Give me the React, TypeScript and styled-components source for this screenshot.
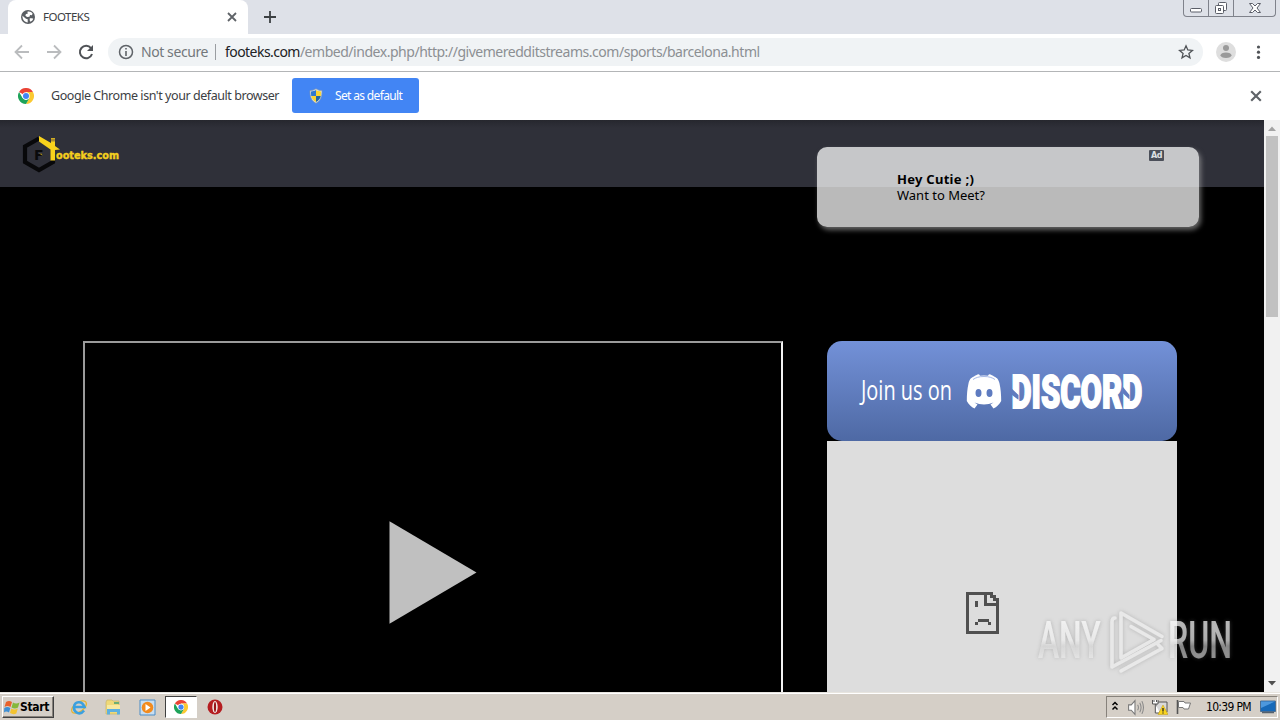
import type { ReactNode } from "react";
import styled, { createGlobalStyle } from "styled-components";

const GlobalStyle = createGlobalStyle`
    * {
        box-sizing: border-box;
    }
    body {
        margin: 0;
        overflow: hidden;
        background: #000;
        font-family: "Noto Sans", "Open Sans", sans-serif;
    }
    svg {
        display: block;
        flex: none;
    }
`;

const Screen = styled.div`
    position: relative;
    display: flex;
    flex-direction: column;
    width: 1280px;
    height: 720px;
    overflow: hidden;
`;

const Text = styled.span<{ $size: number; $spacing?: number; $color?: string; $weight?: number }>`
    font-size: ${(p) => p.$size}px;
    letter-spacing: ${(p) => p.$spacing ?? 0}px;
    color: ${(p) => p.$color ?? "#3c4043"};
    font-weight: ${(p) => p.$weight ?? 400};
    line-height: 16px;
    white-space: pre;
`;

/* browser chrome */

const TabStrip = styled.div`
    display: flex;
    height: 34px;
    padding-left: 8px;
    background: #dee1e8;
`;

const Tab = styled.div`
    display: flex;
    align-items: center;
    width: 240px;
    padding: 0 11px 0 13px;
    background: #fff;
    border-radius: 8px 8px 0 0;
`;

const TabTitle = styled.div`
    display: flex;
    flex: 1;
    margin-left: 8px;
`;

const NewTab = styled.div`
    display: flex;
    align-items: center;
    padding-left: 15px;
    flex: 1;
`;

const Captions = styled.div`
    display: flex;
    height: 17px;
    margin-right: 4px;
    border: 1px solid #7f828b;
    border-top: 0;
    border-radius: 0 0 4px 4px;
`;

const Caption = styled.div<{ $width: number }>`
    display: flex;
    justify-content: center;
    width: ${(p) => p.$width}px;
    & + & {
        border-left: 1px solid #7f828b;
    }
`;

const Toolbar = styled.div`
    display: flex;
    align-items: center;
    height: 38px;
    padding: 0 11px 1px 13px;
    background: #fff;
    border-bottom: 1px solid #b3b5b7;
`;

const NavIcons = styled.div`
    display: flex;
    gap: 14px;
    width: 95px;
`;

const Omnibox = styled.div`
    display: flex;
    align-items: center;
    width: 1095px;
    height: 28px;
    padding: 0 9px 0 10px;
    border-radius: 14px;
    background: #f0f3f5;
`;

const Security = styled.div`
    display: flex;
    align-items: center;
    flex: none;
    width: 75px;
    height: 16px;
    margin: 0 9px 0 7px;
    border-right: 1px solid #9a9da1;
`;

const Url = styled.div`
    flex: 1;
    display: flex;
`;

const ToolbarEnd = styled.div`
    display: flex;
    align-items: center;
    gap: 12px;
    margin-left: 13px;
`;

const InfoBar = styled.div`
    display: flex;
    align-items: center;
    height: 48px;
    padding: 0 18px 1px;
    background: #fff;
`;

const InfoMessage = styled.div`
    display: flex;
    width: 241px;
    margin-left: 17px;
`;

const DefaultButton = styled.div`
    display: flex;
    align-items: center;
    gap: 11px;
    width: 127px;
    height: 35px;
    padding-left: 16px;
    border-radius: 3px;
    background: #4285f4;
`;

const InfoClose = styled.div`
    margin-left: auto;
`;

/* web page */

const Viewport = styled.div`
    display: flex;
    height: 572px;
`;

const Page = styled.div`
    flex: 1;
    position: relative;
    overflow: hidden;
    background: #000;
`;

const SiteHeader = styled.div`
    height: 67px;
    padding: 14px 0 0 21px;
    background: linear-gradient(#26272e, #2f3039 8px);
`;

const Columns = styled.div`
    display: flex;
    gap: 44px;
    padding: 154px 0 0 83px;
`;

const Player = styled.div`
    display: flex;
    justify-content: center;
    width: 700px;
    height: 460px;
    padding-top: 178px;
    border: 2px solid #9b9b9b;
    border-right-color: #f2f2f2;
`;

const Sidebar = styled.div`
    width: 350px;
`;

const DiscordBanner = styled.div`
    height: 100px;
    border-radius: 15px;
    background: linear-gradient(#7391d8, #4e69a4);
`;

const DeadFrame = styled.div`
    display: flex;
    justify-content: center;
    height: 360px;
    padding: 151px 39px 0 0;
    background: #ddd;
`;

const AdPopup = styled.div`
    position: absolute;
    top: 27px;
    left: 817px;
    display: flex;
    width: 382px;
    height: 80px;
    padding-left: 80px;
    border-radius: 10px;
    background: rgba(255, 255, 255, 0.73);
    box-shadow: 2px 3px 5px rgba(170, 170, 170, 0.6);
`;

const AdText = styled.div`
    display: flex;
    flex-direction: column;
    width: 252px;
    padding-top: 24px;
`;

const AdBadge = styled.div`
    width: 15px;
    height: 11px;
    margin-top: 3px;
    border-radius: 1px;
    background: #4b4f59;
    color: #dfe1e5;
    font: bold 8px/11px "DejaVu Sans", sans-serif;
    letter-spacing: -0.5px;
    text-align: center;
`;

const ScrollBar = styled.div`
    display: flex;
    flex-direction: column;
    align-items: center;
    width: 16px;
    background: #f1f1f1;
`;

const ScrollArrow = styled.div<{ $down?: boolean }>`
    display: flex;
    align-items: center;
    justify-content: center;
    width: 16px;
    height: 16px;
    color: ${(p) => (p.$down ? "#505050" : "#a3a3a3")};
    transform: ${(p) => (p.$down ? "rotate(180deg)" : "none")};
`;

const Thumb = styled.div`
    width: 12px;
    height: 181px;
    margin-bottom: auto;
    background: #c1c1c1;
`;

/* taskbar */

const TaskBar = styled.div`
    display: flex;
    align-items: center;
    height: 28px;
    padding: 1px 2px 0;
    background: #d5cfc7;
    border-top: 1px solid #e8e5df;
    box-shadow: inset 0 1px #fff;
`;

const StartButton = styled.div`
    display: flex;
    align-items: center;
    width: 52px;
    height: 22px;
    padding-left: 1px;
    border: 1px solid;
    border-color: #fff #404040 #404040 #fff;
    box-shadow: inset -1px -1px #87827b;
`;

const StartLabel = styled.span`
    font: bold 12px/16px "DejaVu Sans Condensed", sans-serif;
    letter-spacing: -0.35px;
    color: #000;
`;

const Task = styled.div<{ $active?: boolean }>`
    display: flex;
    align-items: center;
    justify-content: center;
    width: 32px;
    height: 22px;
    margin-left: 2px;
    border: 1px solid;
    border-color: ${(p) => (p.$active ? "#404040 #fff #fff #404040" : "transparent")};
    background: ${(p) => (p.$active ? "#fff" : "transparent")};
`;

const Tasks = styled.div`
    display: flex;
    flex: 1;
    padding-left: 7px;
`;

const Tray = styled.div`
    display: flex;
    align-items: center;
    width: 172px;
    height: 22px;
    padding-left: 4px;
    border: 1px solid;
    border-color: #87827b #fff #fff #87827b;
`;

const Clock = styled.span`
    width: 54px;
    margin-left: 14px;
    font: 12px/16px "DejaVu Sans Condensed", sans-serif;
    letter-spacing: -0.68px;
    color: #000;
    white-space: nowrap;
`;

const TrayIcons = styled.div`
    display: flex;
    align-items: center;
    gap: 8px;
`;

const Watermark = styled.div`
    position: absolute;
    left: 1030px;
    top: 604px;
`;

function Icon({ size, box = 16, children }: { size: number; box?: number; children: ReactNode }) {
    return (
        <svg width={size} height={size} viewBox={`0 0 ${box} ${box}`} fill="none">
            {children}
        </svg>
    );
}

function Cross({ size, width = 1.8 }: { size: number; width?: number }) {
    return (
        <Icon size={size} box={10}>
            <path d="M1 1l8 8M9 1L1 9" stroke="#5f6368" strokeWidth={width} />
        </Icon>
    );
}

function ChromeLogo({ size }: { size: number }) {
    return (
        <Icon size={size} box={48}>
            <path d="M24 24L3.2 12A24 24 0 0 1 44.8 12H24z" fill="#ea4335" />
            <path d="M24 12h20.8A24 24 0 0 1 24 48l10.4-18z" fill="#fbc931" />
            <path d="M3.2 12A24 24 0 0 0 24 48l10.4-18-10.4 6-10.4-6z" fill="#1ea35a" />
            <circle cx="24" cy="24" r="11" fill="#fff" />
            <circle cx="24" cy="24" r="9" fill="#4285f4" />
        </Icon>
    );
}

function Globe() {
    return (
        <Icon size={14} box={24}>
            <circle cx="12" cy="12" r="12" fill="#5a5e63" />
            <path
                d="M2.500 10l6 5 3 1v5.500C6 21 2.400 17 2.500 10zM11 3C15 2 18 3.500 20 6.500L18.500 9l-3-.5-1 3-4 .5-3-2 1-3 3-.5z"
                fill="#fff"
            />
            <path d="M15 14h4l2 1c-1 3-3 4.500-5 5l-1-2z" fill="#fff" />
        </Icon>
    );
}

function Shield() {
    return (
        <Icon size={16}>
            <path d="M8 .8c2 1.400 4 1.700 6 1.700 0 6-1 10-6 12.700C3 12.500 2 8.500 2 2.500c2 0 4-.3 6-1.700z" fill="#dce6ee" stroke="#8a98a5" strokeWidth=".7" />
            <path d="M8 2v6H3.200C3 6.500 3 5 3 3.500 5 3.400 6.500 3 8 2z" fill="#2f78d0" />
            <path d="M8 2v6h4.800c.2-1.500.2-3 .2-4.500C11 3.400 9.500 3 8 2z" fill="#fad432" />
            <path d="M8 8v6c-3-1.600-4.300-3.500-4.800-6z" fill="#fad432" />
            <path d="M8 8v6c3-1.600 4.300-3.500 4.800-6z" fill="#25669f" />
        </Icon>
    );
}

function CaptionButtons() {
    return (
        <Captions>
            <Caption $width={24}>
                <svg width="14" height="16" fill="none">
                    <rect x="1.500" y="8.500" width="11" height="3.500" rx="1" fill="#fff" stroke="#5b5e68" />
                </svg>
            </Caption>
            <Caption $width={25}>
                <svg width="14" height="16" fill="none" stroke="#5b5e68">
                    <rect x="4.500" y="2.500" width="8" height="8" rx="1" fill="#fff" />
                    <rect x="1.500" y="5.500" width="8" height="8" rx="1" fill="#fff" />
                    <rect x="4.500" y="8.500" width="2" height="2" />
                </svg>
            </Caption>
            <Caption $width={42}>
                <svg width="14" height="16" fill="none">
                    <path d="M1.500 3.500h3l2.500 2.500 2.500-2.500h3L9 8l3.500 4.500h-3L7 10l-2.500 2.500h-3L5 8z" fill="#fff" stroke="#5b5e68" strokeLinejoin="round" />
                </svg>
            </Caption>
        </Captions>
    );
}

function SiteLogo() {
    return (
        <svg width="102" height="42" fill="none">
            <path d="M18 4.500L4 12.500v15.500l14 8 14-8v-6" stroke="#08080a" strokeWidth="4.200" />
            <path d="M18 2l12 7V4h4v8l5 3.500-5 .5v10.500h-4.500v-11L18 7.500z" fill="#f8d21c" />
            <path d="M30 4.500h4v3h-4z" fill="#a88a2c" />
            <text x="13" y="26" fontFamily="DejaVu Sans, sans-serif" fontWeight="700" fontSize="14" fill="#0a0a0c">F</text>
            <path d="M18 19.500l3 .3.500 2-1.500-1z" fill="#a98d18" />
            <text x="35" y="24.500" textLength="63" lengthAdjust="spacingAndGlyphs" fontFamily="DejaVu Sans, sans-serif" fontWeight="700" fontSize="10" fill="#f4cf1e" stroke="#f4cf1e" strokeWidth=".4">
                ooteks.com
            </text>
        </svg>
    );
}

function DiscordArt() {
    return (
        <svg width="350" height="100" fill="none">
            <text x="34" y="59" textLength="91" lengthAdjust="spacingAndGlyphs" fontFamily="Open Sans, sans-serif" fontSize="28" fill="#fff">
                Join us on
            </text>
            <path
                d="M147 35.500c1-1 3-1.800 5-2.200l1 1.400q4-.6 8 0l1-1.400c2 .4 4 1.200 5 2.200 3.500 1.500 4.500 3 5.500 7 1.200 5 1.700 11 1.700 17.500-2 3.500-4.500 6-7.700 7.500l-3-4 3-2c-6 2.500-13 2.500-19 0l3 2-3 4c-3.200-1.500-5.700-4-7.700-7.500 0-6.500.5-12.500 1.700-17.500 1-4 2-5.500 5.500-7z"
                fill="#fff"
            />
            <path d="M146 38.500c3-2 6-3 11-3s8 1 11 3" stroke="#8fa6de" strokeWidth=".8" />
            <ellipse cx="151.500" cy="52" rx="3" ry="4" fill="#5e7bc0" />
            <ellipse cx="162.500" cy="52" rx="3" ry="4" fill="#5e7bc0" />
            <g transform="translate(184.500 67) scale(.66 1)">
                <text textLength="198" lengthAdjust="spacingAndGlyphs" fontFamily="Roboto, sans-serif" fontWeight="900" fontSize="47" fill="#fff" stroke="#fff" strokeWidth="1.800">
                    DISCORD
                </text>
            </g>
            <path d="M183 46l8.500 8v4.500H191l-8-6zM296 46l6.500 8v4.500l-6.500-6z" fill="#5f7bbf" />
        </svg>
    );
}

function SadPage() {
    return (
        <svg width="33" height="42" fill="#505050" shapeRendering="crispEdges">
            <path d="M0 0h27v3h3v3h3v36H0zM3 3v36h27V14H18V3zM21 3v8h9V9h-3V6h-3V3z" fillRule="evenodd" />
            <path d="M9 9h3v6H9zM12 27h11v3H12zM9 30h3v3H9zM22 30h3v3h-3z" />
        </svg>
    );
}

function AnyRun() {
    return (
        <svg width="206" height="76" fill="none" opacity=".85">
            <defs>
                <linearGradient id="shine" x1="0" y1="0" x2="0" y2="1">
                    <stop offset="0" stopColor="#fff" stopOpacity=".85" />
                    <stop offset=".5" stopColor="#f4f4f4" stopOpacity=".8" />
                    <stop offset=".6" stopColor="#ddd" stopOpacity=".65" />
                    <stop offset="1" stopColor="#fff" stopOpacity=".7" />
                </linearGradient>
                <filter id="halo" x="-20%" y="-20%" width="140%" height="140%">
                    <feDropShadow dx="0" dy="0" stdDeviation="2" floodColor="#777" floodOpacity=".6" />
                </filter>
            </defs>
            <g filter="url(#halo)" fontFamily="Roboto, sans-serif" fontSize="51" fontWeight="500" fill="url(#shine)">
                <g transform="translate(8 54) scale(.64 1)">
                    <text textLength="98" lengthAdjust="spacingAndGlyphs">ANY</text>
                </g>
                <g transform="translate(138 54) scale(.64 1)">
                    <text textLength="100" lengthAdjust="spacingAndGlyphs">RUN</text>
                </g>
                <g stroke="#f2f2f2" strokeWidth="3.500" strokeLinecap="round" strokeLinejoin="round" fill="none" strokeOpacity=".8">
                    <path d="M91 54V9l41 23.500M91 54l33-18.500-23-13" />
                    <path d="M85 14q-3 0-3 4v45l49-26.500M91 67l41-22.500-4-4" />
                </g>
            </g>
        </svg>
    );
}

function TaskIcons() {
    return (
        <Tasks>
            <Task>
                <Icon size={18} box={18}>
                    <ellipse cx="9" cy="9" rx="8.500" ry="4.500" transform="rotate(-35 9 9)" stroke="#e5b42f" strokeWidth="1.300" />
                    <path d="M14 12.500C10 18 3.500 14.500 4 9s8-7 10.500 0H5" stroke="#3ba0df" strokeWidth="2.600" />
                </Icon>
            </Task>
            <Task>
                <Icon size={18} box={18}>
                    <path d="M2 4l1-2h5l1 1h6v13H2z" fill="#efd978" stroke="#c8b468" strokeWidth=".7" />
                    <path d="M10 4h5v2h-5z" fill="#6cae74" />
                    <path d="M3 7h13v7H3z" fill="#f7e9a0" />
                    <path d="M3 16.500V11h13v5.500h-3V14H6v2.500z" fill="#5eb0df" />
                </Icon>
            </Task>
            <Task>
                <Icon size={17} box={17}>
                    <path d="M1 1h15v15H1z" fill="#c9def0" stroke="#4b8dc7" />
                    <circle cx="8.500" cy="8.500" r="5.800" fill="#f28b1e" />
                    <path d="M6.500 5l5 3.500-5 3.500z" fill="#fff" />
                </Icon>
            </Task>
            <Task $active>
                <ChromeLogo size={14} />
            </Task>
            <Task>
                <Icon size={16}>
                    <circle cx="8" cy="8" r="7.500" fill="#b51d20" />
                    <ellipse cx="8" cy="8" rx="2.700" ry="6" fill="#f3eae6" />
                    <ellipse cx="8" cy="8" rx="1.100" ry="5" fill="#981417" />
                </Icon>
            </Task>
        </Tasks>
    );
}

function SystemTray() {
    return (
        <Tray>
            <TrayIcons>
                <svg width="8" height="12" fill="none" stroke="#000" strokeWidth="1.500">
                    <path d="M1.500 4L4 1.500 6.500 4M1.500 8.500L4 6l2.500 2.500" />
                </svg>
                <Icon size={17}>
                    <path d="M1.500 5.500H4l3.500-4v13l-3.500-4H1.500z" fill="#fff" stroke="#777" />
                    <path d="M10 5.500q1.500 2.500 0 5M12 3.500q2.500 4.500 0 9M14 2q3 6 0 12" stroke="#888" />
                </Icon>
                <Icon size={16}>
                    <path d="M4 3h11v10H4z" fill="#d9d9d9" stroke="#555" />
                    <path d="M.5 1v4H6V1M3.300 5v9H8M2 1v2M4.500 1v2" fill="#fff" stroke="#555" />
                    <path d="M11 6l5 9.500H6z" fill="#f9d51f" stroke="#c09a10" strokeWidth=".5" />
                    <path d="M11 9v3.500M11 13.500v1" stroke="#222" strokeWidth="1.300" />
                </Icon>
                <Icon size={16}>
                    <path d="M1.500 1v14" stroke="#555" strokeWidth="1.600" />
                    <path d="M2.500 2.500H8l1 1.500h5.500l-2 6H8L7 8.500H2.500z" fill="#fff" stroke="#777" />
                </Icon>
            </TrayIcons>
            <Clock>10:39 PM</Clock>
            <Icon size={16}>
                <path d="M.5 2h15v10.500H.5z" fill="#1769b8" stroke="#4c6e91" />
                <path d="M1 2.500h14L1 9z" fill="#4d98dd" />
                <path d="M2 13.500h12" stroke="#54616e" strokeWidth="1.500" />
            </Icon>
        </Tray>
    );
}

function App() {
    return (
        <Screen>
            <GlobalStyle />
            <TabStrip>
                <Tab>
                    <Globe />
                    <TabTitle>
                        <Text $size={11.5} $spacing={-0.5}>FOOTEKS</Text>
                    </TabTitle>
                    <Cross size={10} />
                </Tab>
                <NewTab>
                    <Icon size={14} box={14}>
                        <path d="M7 1v12M1 7h12" stroke="#3c4043" strokeWidth="1.800" />
                    </Icon>
                </NewTab>
                <CaptionButtons />
            </TabStrip>
            <Toolbar>
                <NavIcons>
                    <Icon size={18} box={18}>
                        <path d="M16 9H3M9 2.500L2.500 9 9 15.500" stroke="#babcbe" strokeWidth="1.800" />
                    </Icon>
                    <Icon size={18} box={18}>
                        <path d="M2 9h13M9 2.500L15.500 9 9 15.500" stroke="#babcbe" strokeWidth="1.800" />
                    </Icon>
                    <Icon size={18} box={18}>
                        <path d="M14 5.200A6.200 6.200 0 1 0 15 11" stroke="#505357" strokeWidth="2" />
                        <path d="M16 2v6h-6z" fill="#505357" />
                    </Icon>
                </NavIcons>
                <Omnibox>
                    <Icon size={16}>
                        <circle cx="8" cy="8" r="6.500" stroke="#5f6368" strokeWidth="1.500" />
                        <path d="M8 7v5M8 4v1.600" stroke="#5f6368" strokeWidth="1.600" />
                    </Icon>
                    <Security>
                        <Text $size={14} $spacing={-0.42} $color="#73777b">Not secure</Text>
                    </Security>
                    <Url>
                        <Text $size={14} $spacing={-0.55} $color="#202124">footeks.com</Text>
                        <Text $size={14} $spacing={-0.47} $color="#8c8f93">/embed/index.php/http://givemeredditstreams.com/sports/barcelona.html</Text>
                    </Url>
                    <Icon size={16}>
                        <path d="M8 1.800l1.800 4.200 4.600.4-3.500 3 1.100 4.500L8 11.500l-4 2.400 1.100-4.500-3.500-3L6.200 6z" stroke="#505357" strokeWidth="1.300" />
                    </Icon>
                </Omnibox>
                <ToolbarEnd>
                    <Icon size={20} box={20}>
                        <circle cx="10" cy="10" r="10" fill="#dedede" />
                        <circle cx="10" cy="6" r="3" fill="#9a9a9a" />
                        <ellipse cx="10" cy="13.300" rx="5.500" ry="2.800" fill="#9a9a9a" />
                    </Icon>
                    <svg width="20" height="16" fill="#505357">
                        <circle cx="10.500" cy="3" r="1.600" />
                        <circle cx="10.500" cy="8.200" r="1.600" />
                        <circle cx="10.500" cy="13.400" r="1.600" />
                    </svg>
                </ToolbarEnd>
            </Toolbar>
            <InfoBar>
                <ChromeLogo size={16} />
                <InfoMessage>
                    <Text $size={12.5} $spacing={-0.44}>Google Chrome isn't your default browser</Text>
                </InfoMessage>
                <DefaultButton>
                    <Shield />
                    <Text $size={12} $spacing={-0.65} $color="#fff">Set as default</Text>
                </DefaultButton>
                <InfoClose>
                    <Cross size={12} />
                </InfoClose>
            </InfoBar>
            <Viewport>
                <Page>
                    <SiteHeader>
                        <SiteLogo />
                    </SiteHeader>
                    <Columns>
                        <Player>
                            <svg width="88" height="104">
                                <path d="M.5.200v102.500L87.500 51.500z" fill="#c0c0c0" />
                            </svg>
                        </Player>
                        <Sidebar>
                            <DiscordBanner>
                                <DiscordArt />
                            </DiscordBanner>
                            <DeadFrame>
                                <SadPage />
                            </DeadFrame>
                        </Sidebar>
                    </Columns>
                    <AdPopup>
                        <AdText>
                            <Text $size={13} $spacing={0.27} $color="#000" $weight={700}>Hey Cutie ;)</Text>
                            <Text $size={13} $color="#000">Want to Meet?</Text>
                        </AdText>
                        <AdBadge>Ad</AdBadge>
                    </AdPopup>
                </Page>
                <ScrollBar>
                    <ScrollArrow>
                        <svg width="8" height="5" fill="currentColor">
                            <path d="M0 5l4-4.500L8 5z" />
                        </svg>
                    </ScrollArrow>
                    <Thumb />
                    <ScrollArrow $down>
                        <svg width="8" height="5" fill="currentColor">
                            <path d="M0 5l4-4.500L8 5z" />
                        </svg>
                    </ScrollArrow>
                </ScrollBar>
            </Viewport>
            <TaskBar>
                <StartButton>
                    <Icon size={16}>
                        <path d="M2 3q3-2 6 0L6.500 8q-3-2-6 0z" fill="#e8622c" />
                        <path d="M9 3.500q3 2 6.500 0L14 8.500q-3 2-6.500 0z" fill="#85b83a" />
                        <path d="M.3 9q3-2 6 0L5 13.500q-3-2-5 0z" fill="#3e8fd4" />
                        <path d="M7.300 9.500q3 2 6.500 0l-1.500 5q-3 1.500-6.300-.5z" fill="#f3c330" />
                    </Icon>
                    <StartLabel>Start</StartLabel>
                </StartButton>
                <TaskIcons />
                <SystemTray />
            </TaskBar>
            <Watermark>
                <AnyRun />
            </Watermark>
        </Screen>
    );
}

export default App;
